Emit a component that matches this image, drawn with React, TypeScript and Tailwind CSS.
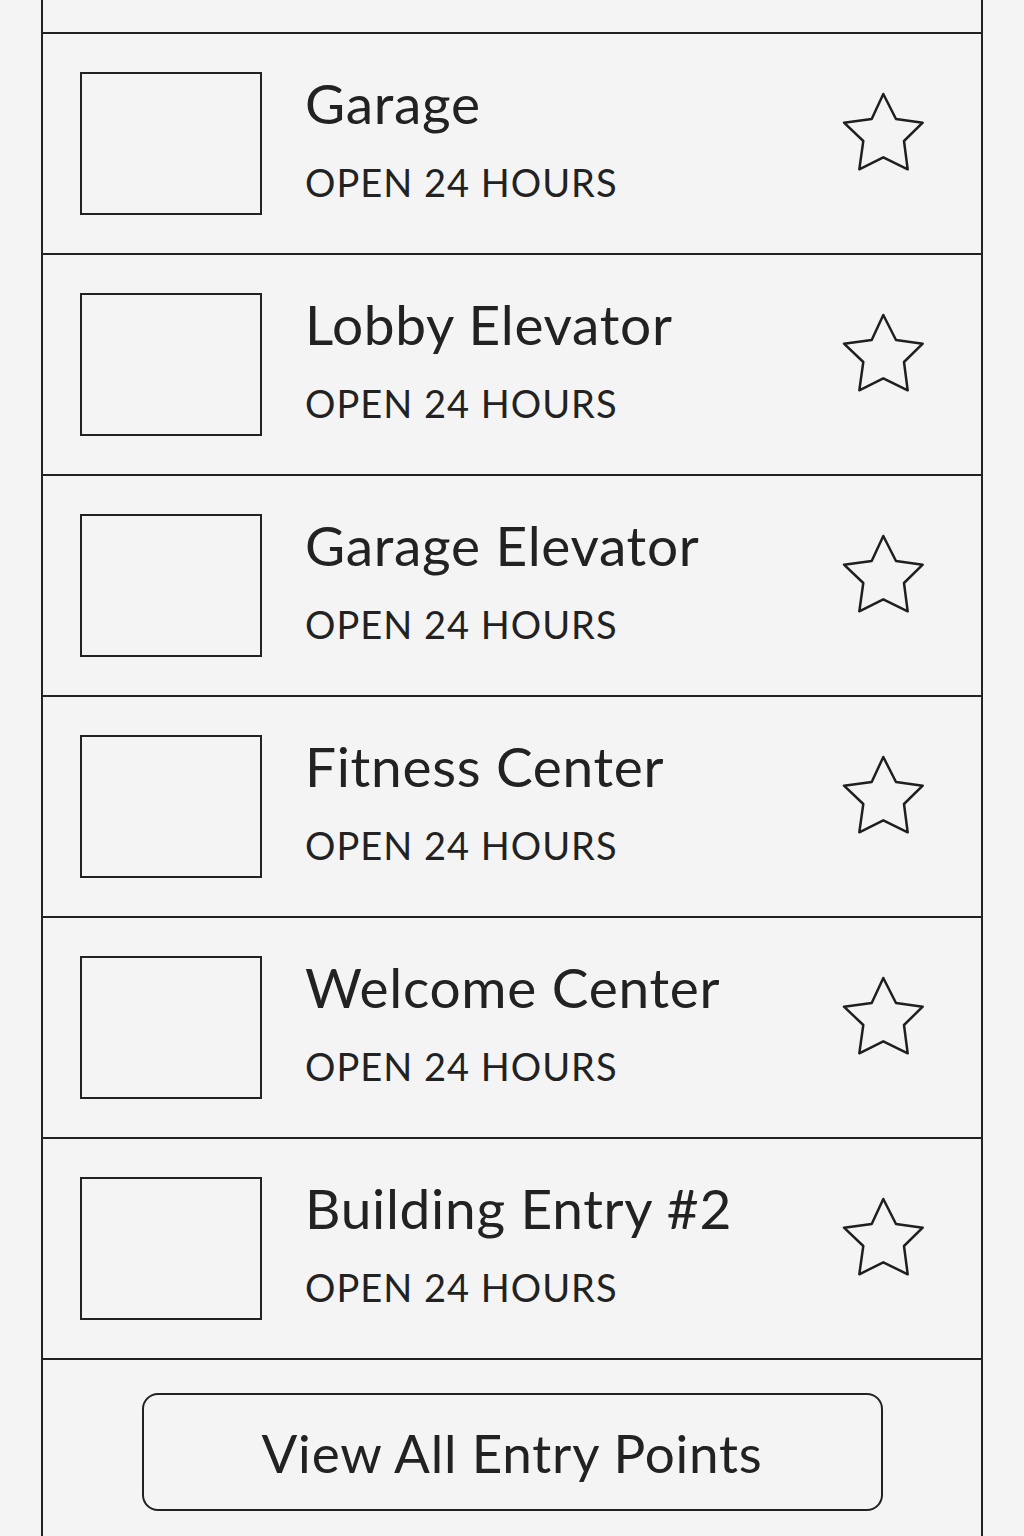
import React from "react";

const items = [
  "Garage",
  "Lobby Elevator",
  "Garage Elevator",
  "Fitness Center",
  "Welcome Center",
  "Building Entry #2",
];

function Star() {
  return (
    <svg width="86" height="83" viewBox="0 0 86 83" fill="none" className="shrink-0">
      <polygon
        points="43.3,4 56,29 82.7,32.7 64,51 67.7,79.3 43.3,67.3 19.3,79.3 23.3,51 4,32.7 31.7,29"
        stroke="#1f1f1f"
        strokeWidth="2.5"
        strokeLinejoin="round"
      />
    </svg>
  );
}

export default function App() {
  return (
    <div
      className="w-[1024px] h-[1536px] bg-[#f4f4f4] overflow-hidden"
      style={{ fontFamily: 'Lato, sans-serif' }}
    >
      <div className="ml-[41px] w-[942px] h-[1536px] border-x-2 border-[#222] flex flex-col">
        <div className="h-[34px] border-b-2 border-[#222] shrink-0" />
        {items.map((name) => (
          <div key={name} className="h-[221px] shrink-0 border-b-2 border-[#222] flex items-center">
            <div className="ml-[37px] w-[182px] h-[143px] border-2 border-[#222] shrink-0" />
            <div className="ml-[43px] self-start pt-[42px] flex flex-col text-[#222]">
              <div className="text-[55px] leading-[55px] tracking-[0.7px] whitespace-nowrap">{name}</div>
              <div className="mt-[32px] text-[38px] leading-[38px] tracking-[1px] whitespace-nowrap">OPEN 24 HOURS</div>
            </div>
            <div className="ml-auto mr-[55px] self-start mt-[56px]">
              <Star />
            </div>
          </div>
        ))}
        <div className="mt-[33px] mx-auto w-[741px] h-[118px] border-2 border-[#222] rounded-[16px] flex items-center justify-center text-[53px] tracking-[0.8px] text-[#222] leading-none">
          View All Entry Points
        </div>
      </div>
    </div>
  );
}
